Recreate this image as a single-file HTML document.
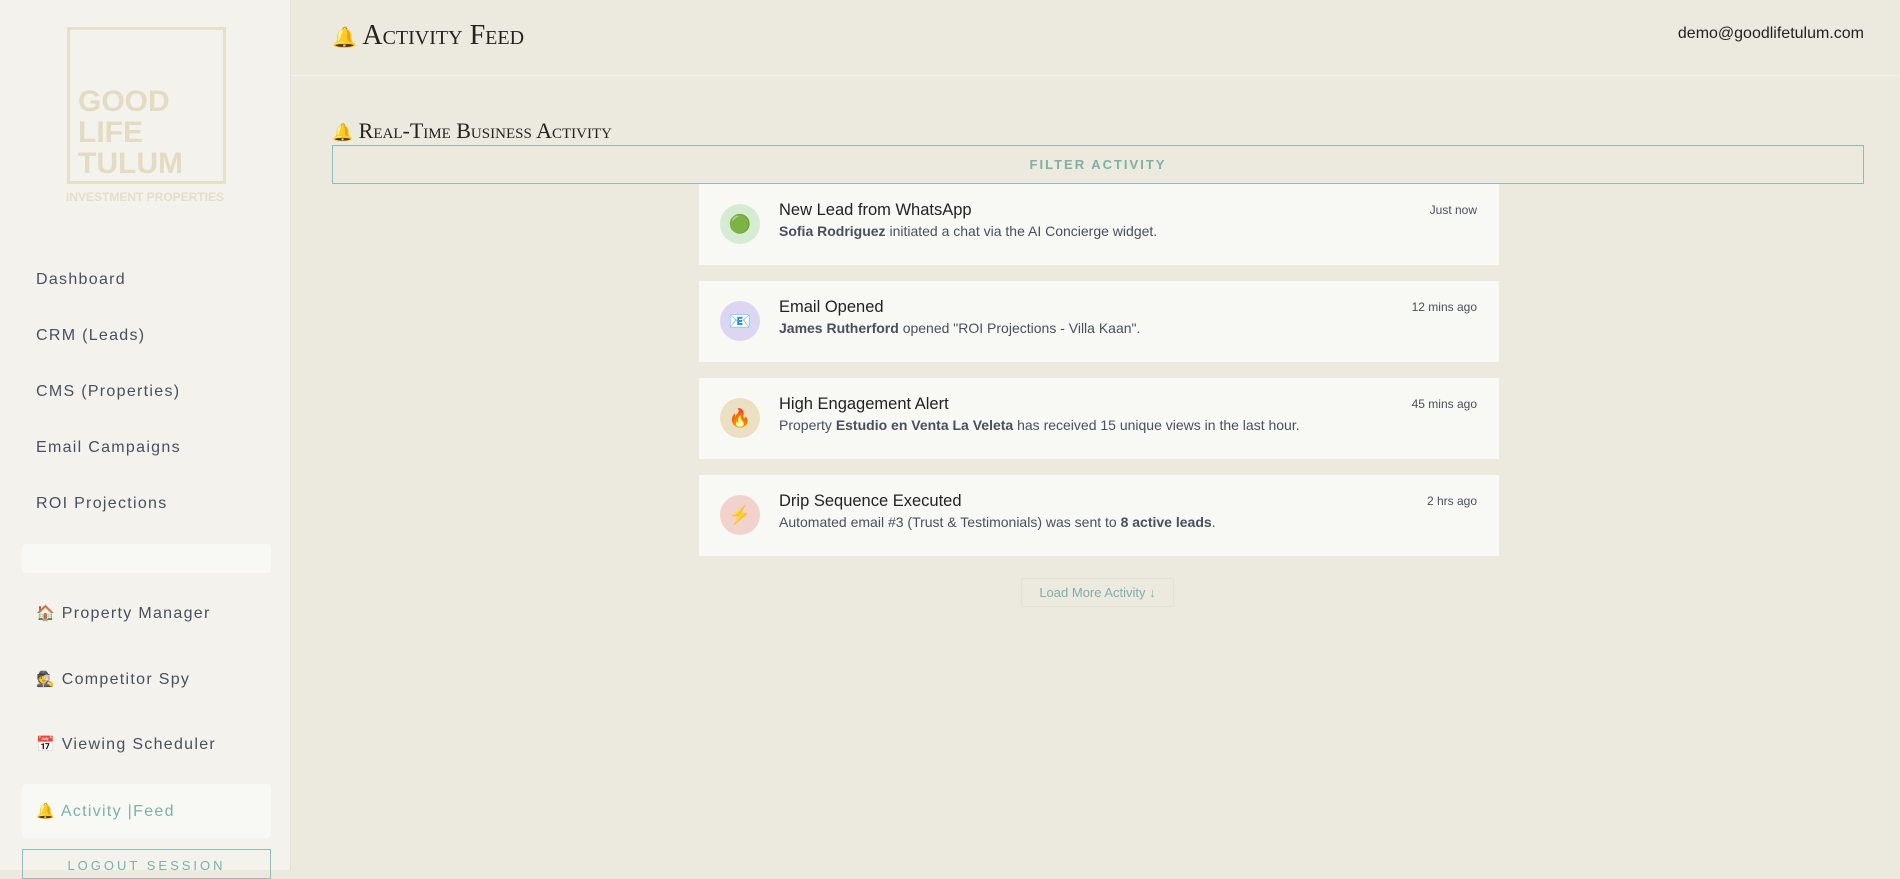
<!DOCTYPE html>
<html><head><meta charset="utf-8"><style>
*{box-sizing:border-box;margin:0;padding:0}
body{width:1900px;height:870px;overflow:hidden;background:#ece9de;font-family:"Liberation Sans",sans-serif;position:relative;color:#2a2a2a}
.sb{position:absolute;left:0;top:0;width:291px;height:870px;background:#f3f2ed;border-right:1px solid #e3e0d6}
.logo{position:absolute;left:67px;top:27px;width:159px;height:157px;border:3px solid #e6e0c8}
.logo div{position:absolute;left:8px;top:56px;font-weight:bold;font-size:30px;line-height:31px;color:#e3dcc3;letter-spacing:0}
.inv{position:absolute;left:66px;top:190px;font-size:12px;font-weight:bold;color:#e6dfc7;letter-spacing:0}
.nav{position:absolute;left:36px;font-size:16px;color:#4a4f5e;letter-spacing:1.3px}
.em{font-size:15px}
.gbox{position:absolute;left:22px;width:249px;background:#f8f8f4;border-radius:4px}
.hdr{position:absolute;left:292px;top:0;right:0;height:76px;border-bottom:1px solid #f3f1ea}
.title{position:absolute;left:332px;top:20px;font-family:"Liberation Serif",serif;font-variant:small-caps;font-size:28px;color:#222}
.title span,.sub span{font-size:20px}
.mail{position:absolute;right:36px;top:25px;font-size:16px;color:#222}
.sub{position:absolute;left:332px;top:118px;font-family:"Liberation Serif",serif;font-variant:small-caps;font-size:22px;color:#222}
.sub span{font-size:17px}
.filter{position:absolute;left:332px;top:145px;width:1532px;height:39px;border:1px solid #8fbcb5;text-align:center;line-height:37px;font-size:13px;font-weight:bold;letter-spacing:2px;color:#7fb0a8}
.card{position:absolute;left:699px;width:800px;height:81px;background:#f8f8f4}
.ic{position:absolute;left:21px;top:20px;width:40px;height:40px;border-radius:50%;text-align:center;line-height:40px;font-size:18px}
.ct{position:absolute;left:80px;top:17px;font-size:16.5px;color:#222}
.cd{position:absolute;left:80px;top:39px;font-size:14px;color:#4a4f5e}
.cd b{font-weight:bold;color:#4a4f5e}
.tm{position:absolute;right:22px;top:19px;font-size:12px;color:#4a4f5e}
.load{position:absolute;left:1021px;top:578px;width:153px;height:29px;border:1px solid #e3e1d8;text-align:center;line-height:27px;font-size:13px;color:#7fb0a8;border-radius:2px}
</style></head><body>
<div class="sb">
<div class="logo"><div>GOOD<br>LIFE<br>TULUM</div></div>
<div class="inv">INVESTMENT PROPERTIES</div>
<div class="nav" style="top:271px">Dashboard</div>
<div class="nav" style="top:327px">CRM (Leads)</div>
<div class="nav" style="top:383px">CMS (Properties)</div>
<div class="nav" style="top:439px">Email Campaigns</div>
<div class="nav" style="top:495px">ROI Projections</div>
<div class="gbox" style="top:544px;height:29px"></div>
<div class="nav" style="top:604px"><span class="em">🏠</span> Property Manager</div>
<div class="nav" style="top:670px"><span class="em">🕵️</span> Competitor Spy</div>
<div class="nav" style="top:735px"><span class="em">📅</span> Viewing Scheduler</div>
<div class="gbox" style="top:784px;height:54px"></div>
<div class="nav" style="top:802px;color:#7fb0a8"><span class="em">🔔</span> Activity |Feed</div>
<div style="position:absolute;left:22px;top:849px;width:249px;height:30px;border:1px solid #8fbcb5;text-align:center;font-size:13px;letter-spacing:3px;color:#7fb0a8;padding-top:8px">LOGOUT SESSION</div>
</div>
<div class="hdr"></div>
<div class="title"><span>🔔</span> Activity Feed</div>
<div class="mail">demo@goodlifetulum.com</div>
<div class="sub"><span>🔔</span> Real-Time Business Activity</div>
<div class="filter">FILTER ACTIVITY</div>
<div class="card" style="top:184px"><div class="ic" style="background:#d6ecd2">🟢</div><div class="ct">New Lead from WhatsApp</div><div class="cd"><b>Sofia Rodriguez</b> initiated a chat via the AI Concierge widget.</div><div class="tm">Just now</div></div>
<div class="card" style="top:281px"><div class="ic" style="background:#dcd6f2">📧</div><div class="ct">Email Opened</div><div class="cd"><b>James Rutherford</b> opened "ROI Projections - Villa Kaan".</div><div class="tm">12 mins ago</div></div>
<div class="card" style="top:378px"><div class="ic" style="background:#ece0c2">🔥</div><div class="ct">High Engagement Alert</div><div class="cd">Property <b>Estudio en Venta La Veleta</b> has received 15 unique views in the last hour.</div><div class="tm">45 mins ago</div></div>
<div class="card" style="top:475px"><div class="ic" style="background:#f1d2cd">⚡</div><div class="ct">Drip Sequence Executed</div><div class="cd">Automated email #3 (Trust &amp; Testimonials) was sent to <b>8 active leads</b>.</div><div class="tm">2 hrs ago</div></div>
<div class="load">Load More Activity ↓</div>
</body></html>
